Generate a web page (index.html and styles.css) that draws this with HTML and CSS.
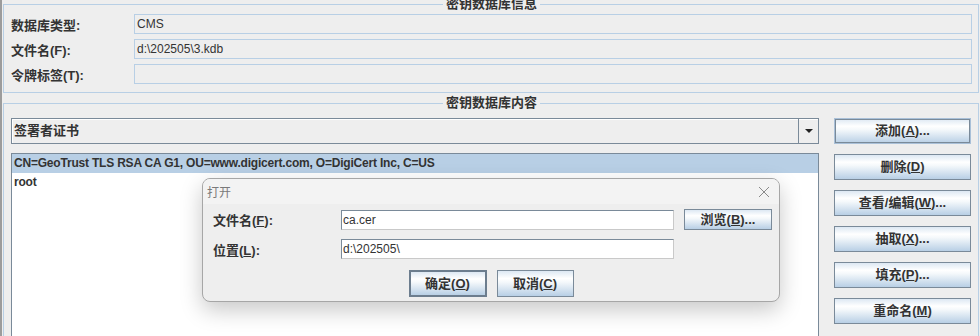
FILE: index.html
```html
<!DOCTYPE html>
<html lang="zh-CN">
<head>
  <meta charset="UTF-8" />
  <title>密钥数据库</title>
  <link rel="stylesheet" href="styles.css">
</head>
<body>
  <div class="window">
    <fieldset class="group group-info">
      <legend>密钥数据库信息</legend>
      <div class="info-form">
        <label>数据库类型:</label>
        <div class="field">CMS</div>
        <label>文件名(F):</label>
        <div class="field">d:\202505\3.kdb</div>
        <label>令牌标签(T):</label>
        <div class="field"></div>
      </div>
    </fieldset>

    <fieldset class="group group-content">
      <legend>密钥数据库内容</legend>
      <div class="content-body">
        <div class="left-col">
          <div class="combo">
            <span class="combo-text">签署者证书</span>
            <span class="combo-arrow"></span>
          </div>
          <ul class="cert-list">
            <li class="selected">CN=GeoTrust TLS RSA CA G1, OU=www.digicert.com, O=DigiCert Inc, C=US</li>
            <li>root</li>
          </ul>
        </div>
        <div class="actions">
          <button class="btn focused">添加(<u>A</u>)...</button>
          <button class="btn">删除(<u>D</u>)</button>
          <button class="btn">查看/编辑(<u>W</u>)...</button>
          <button class="btn">抽取(<u>X</u>)...</button>
          <button class="btn">填充(<u>P</u>)...</button>
          <button class="btn">重命名(<u>M</u>)</button>
        </div>
      </div>
    </fieldset>

    <div class="dialog">
      <div class="dialog-title">
        <span>打开</span>
        <svg class="close" width="12" height="12" viewBox="0 0 12 12">
          <path d="M1 1 L11 11 M11 1 L1 11" stroke="#8a8a8a" stroke-width="1" fill="none"/>
        </svg>
      </div>
      <div class="dialog-body">
        <div class="dialog-row">
          <label>文件名(<u>F</u>):</label>
          <div class="input">ca.cer</div>
          <button class="btn btn-browse">浏览(<u>B</u>)...</button>
        </div>
        <div class="dialog-row">
          <label>位置(<u>L</u>):</label>
          <div class="input">d:\202505\</div>
        </div>
        <div class="dialog-buttons">
          <button class="btn btn-ok">确定(<u>O</u>)</button>
          <button class="btn btn-cancel">取消(<u>C</u>)</button>
        </div>
      </div>
    </div>
  </div>
</body>
</html>
```

FILE: styles.css
```css
body {
  margin: 0;
  background-color: #eeeeee;
  color: #333333;
  font-family: "Liberation Sans", "Noto Sans CJK SC", sans-serif;
  overflow: hidden;
}

.window {
  position: relative;
  height: 336px;
  border-left: 2px solid #9c9c9c;
  overflow: hidden;
}

.group {
  margin: 0 1px 0 1px;
  padding: 0 6px 0 7px;
  border: 1px solid #b8cfe5;
  min-width: 0;
}

.group legend {
  margin: 0 auto;
  padding: 0 3px;
  font-size: 13px;
  font-weight: bold;
  line-height: 14px;
  color: #333333;
}

.group-info {
  margin-top: -3px;
  padding-top: 3px;
  padding-bottom: 8px;
}

.info-form {
  display: grid;
  grid-template-columns: 123px 1fr;
  grid-auto-rows: 20px;
  row-gap: 5px;
  align-items: center;
}

.info-form label {
  font-size: 13px;
  font-weight: bold;
}

.field {
  height: 20px;
  box-sizing: border-box;
  border: 1px solid #b8cfe5;
  padding-left: 2px;
  font-size: 12px;
  line-height: 18px;
}

.group-content {
  margin-top: 3px;
  padding-top: 8px;
  height: 260px;
}

.content-body {
  display: flex;
  gap: 15px;
}

.left-col {
  width: 808px;
}

.combo {
  display: flex;
  height: 26px;
  box-sizing: border-box;
  border: 1px solid #7a8a99;
  box-shadow: inset 1px 1px 0 #ffffff;
}

.combo-text {
  flex: 1;
  padding-left: 2px;
  font-size: 13px;
  font-weight: bold;
  line-height: 24px;
}

.combo-arrow {
  width: 19px;
  border-left: 1px solid #7a8a99;
  display: flex;
  align-items: center;
  justify-content: center;
}

.combo-arrow::after {
  content: "";
  border-left: 4px solid transparent;
  border-right: 4px solid transparent;
  border-top: 4px solid #222222;
}

.cert-list {
  list-style: none;
  margin: 9px 0 0 0;
  padding: 0;
  height: 200px;
  border: 1px solid #7a8a99;
  background-color: #ffffff;
}

.cert-list li {
  height: 19px;
  padding-left: 2px;
  font-size: 12px;
  font-weight: bold;
  line-height: 19px;
  letter-spacing: -0.2px;
}

.cert-list li.selected {
  background-color: #b8cfe5;
}

.actions {
  display: flex;
  flex-direction: column;
  gap: 10px;
}

.btn {
  width: 137px;
  height: 26px;
  margin: 0;
  padding: 0;
  border: 1px solid #7a8a99;
  background: linear-gradient(#dde8f3 0%, #ffffff 30%, #f4f8fb 45%, #b8cfe5 100%);
  font-family: "Liberation Sans", "Noto Sans CJK SC", sans-serif;
  font-size: 13px;
  font-weight: bold;
  color: #333333;
  line-height: 24px;
}

.btn u {
  text-underline-offset: 1px;
}

.btn.focused {
  border-color: #a9c0d8;
  box-shadow: inset 0 0 0 1px #7a8a99;
}

.dialog {
  position: absolute;
  left: 200px;
  top: 178px;
  width: 578px;
  height: 124px;
  box-sizing: border-box;
  border: 1px solid #a6a6a6;
  border-radius: 8px;
  background-color: #eeeeee;
  box-shadow: 0 8px 22px rgba(0, 0, 0, 0.22);
  overflow: hidden;
}

.dialog-title {
  height: 25px;
  display: flex;
  align-items: center;
  justify-content: space-between;
  padding: 0 8px 0 4px;
  background-color: #f3f3f3;
  font-size: 12px;
  color: #7a7a7a;
}

.close {
  margin-right: 1px;
}

.dialog-body {
  padding: 5px 0 0 10px;
}

.dialog-row {
  display: flex;
  align-items: center;
  height: 21px;
  margin-bottom: 9px;
}

.dialog-row + .dialog-row {
  height: 20px;
  margin-bottom: 11px;
}

.dialog-row label {
  width: 128px;
  font-size: 13px;
  font-weight: bold;
}

.input {
  width: 333px;
  height: 20px;
  box-sizing: border-box;
  border: 1px solid #7a8a99;
  border-right-color: #c9c9c9;
  border-bottom-color: #c9c9c9;
  background-color: #ffffff;
  padding-left: 1px;
  font-size: 12px;
  line-height: 18px;
}

.btn-browse {
  width: 88px;
  height: 21px;
  margin-left: 10px;
  line-height: 19px;
}

.dialog-buttons {
  display: flex;
  justify-content: center;
  gap: 10px;
  margin-left: -10px;
}

.btn-ok {
  width: 78px;
  height: 27px;
  border: 2px solid #6c7d8e;
}

.btn-cancel {
  width: 77px;
  height: 27px;
}
```
